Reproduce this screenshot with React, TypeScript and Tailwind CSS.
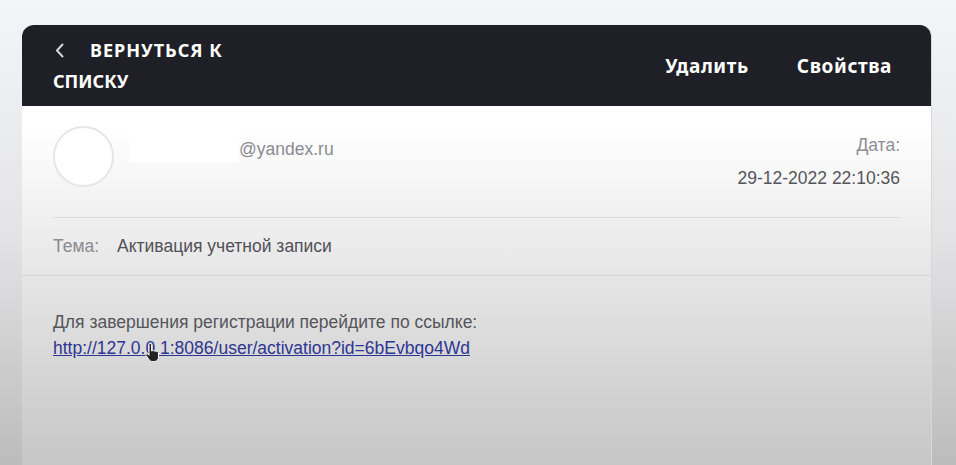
export default function App() {
  return (
    <div className="h-[465px] w-[956px] overflow-hidden bg-gradient-to-b from-[#f4f5f9] via-[#e4e4e6] to-[#bcbcbc] pt-[25px] pl-[22px] font-['Liberation_Sans',Arial,sans-serif]">
      <div className="relative h-[460px] w-[910px] overflow-hidden rounded-t-[12px] border-r border-[#d8d8dc]">
        {/* header */}
        <div className="flex h-[81px] items-start justify-between bg-[#1f1f27] pl-[31px] pr-[39px] font-['Noto_Sans',sans-serif] text-[18px] font-bold text-white">
          <div className="mt-[10px] w-[200px] leading-[31px] tracking-[1px]">
            <svg className="mr-[26px] ml-[2px] inline-block align-[-1px]" width="9" height="15" viewBox="0 0 9 15">
              <path d="M7.5 1.5 2 7.5l5.5 6" fill="none" stroke="#d6d6da" strokeWidth="2" strokeLinecap="round" strokeLinejoin="round" />
            </svg>
            ВЕРНУТЬСЯ К <span className="tracking-[0px]">СПИСКУ</span>
          </div>
          <div className="mt-[27px] flex gap-[48px] text-[19px] tracking-[0.6px]">
            <span>Удалить</span>
            <span>Свойства</span>
          </div>
        </div>

        {/* body */}
        <div className="h-[379px] bg-gradient-to-b from-white from-[6%] to-[#c3c3c3] text-[17.5px]">
          <div className="px-[31px]">
            <div className="flex h-[112px] items-start border-b border-[#dcdcdc] pt-[20px]">
              <div className="h-[61px] w-[61px] shrink-0 rounded-full border-2 border-[#e6e6e6] bg-white" />
              <div className="ml-[15px] mt-[4px] h-[32px] w-[110px] bg-white" />
              <div className="mt-[10px] text-[#8a8a92]">@yandex.ru</div>
              <div className="ml-auto mt-[3px] text-right leading-[33px]">
                <div className="text-[#8e8e95]">Дата:</div>
                <div className="text-[#55555b]">29-12-2022 22:10:36</div>
              </div>
            </div>
            <div className="flex h-[57px] items-center">
              <span className="w-[64px] text-[#8a8a90]">Тема:</span>
              <span className="text-[#515157]">Активация учетной записи</span>
            </div>
          </div>
          <div className="border-t border-[#d4d4d4] px-[31px] pt-[33px] leading-[26px]">
            <div className="text-[#55555a]">Для завершения регистрации перейдите по ссылке:</div>
            <div className="relative inline-block">
              <a href="#" className="text-[#2e3592] underline">
                http://127.0.0.1:8086/user/activation?id=6bEvbqo4Wd
              </a>
              <svg className="absolute left-[92px] top-[8px]" width="16" height="20" viewBox="0 0 16 20">
                <path
                  d="M4 1.5c0-.8.6-1.3 1.3-1.3s1.3.5 1.3 1.3V8l.6-.1c.6-.6 1.8-.5 2.2.3.6-.5 1.7-.3 2.1.5.7-.3 1.8 0 2 .9v4.6c0 2.4-1.6 4.3-4 4.3H7.3c-1.4 0-2.4-.7-3.2-1.8L1.2 12.7c-.5-.7-.3-1.5.3-1.8.6-.4 1.3-.2 1.8.4L4 12.3z"
                  fill="#222"
                  stroke="#fff"
                  strokeWidth="1"
                />
              </svg>
            </div>
          </div>
        </div>
      </div>
    </div>
  );
}
